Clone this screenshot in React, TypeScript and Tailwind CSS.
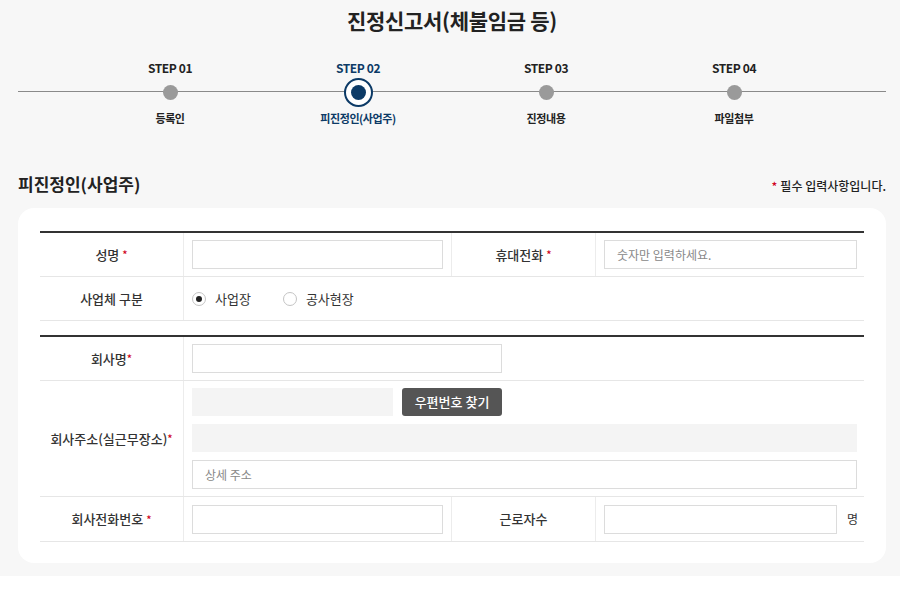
import React from "react";

const FONT = { fontFamily: '"Noto Sans CJK KR", "Noto Sans", sans-serif' };

const steps = [
  { no: "STEP 01", label: "등록인" },
  { no: "STEP 02", label: "피진정인(사업주)", active: true },
  { no: "STEP 03", label: "진정내용" },
  { no: "STEP 04", label: "파일첨부" },
];

function Req({ tight }: { tight?: boolean }) {
  return (
    <span className={`text-[#d0021b] text-[11px] align-top ${tight ? "ml-0" : "ml-[3px]"}`}>*</span>
  );
}

function TextInput({ className = "", placeholder }: { className?: string; placeholder?: string }) {
  return (
    <input
      placeholder={placeholder}
      className={`h-[29px] border border-[#dcdcdc] bg-white px-3 text-[12px] text-[#333] placeholder:text-[#888] outline-none ${className}`}
    />
  );
}

function Label({ children, border = true }: { children: React.ReactNode; border?: boolean }) {
  return (
    <div
      className={`w-[144px] shrink-0 flex items-center justify-center text-[13px] font-medium text-[#333] ${
        border ? "border-r border-[#ececec]" : ""
      }`}
    >
      {children}
    </div>
  );
}

function Radio({ checked, label }: { checked?: boolean; label: string }) {
  return (
    <label className="flex items-center gap-[9px] text-[13px] text-[#333]">
      <span className="w-[14px] h-[14px] rounded-full border border-[#c4c4c4] bg-white flex items-center justify-center">
        {checked && <span className="w-[6px] h-[6px] rounded-full bg-[#222]" />}
      </span>
      {label}
    </label>
  );
}

export default function App() {
  return (
    <div style={FONT} className="min-h-[593px] bg-white">
      <div className="bg-[#f7f7f7] pl-[18px] pr-[14px] pb-[13px]">
        <h1 className="h-[40px] leading-[40px] text-center text-[21px] font-bold text-[#222] tracking-[-0.3px]">
          진정신고서(체불임금 등)
        </h1>

        {/* steps */}
        <div className="relative mt-[18px] flex pl-[58px]">
          <div className="absolute left-0 right-0 top-[33px] h-px bg-[#8a8a8a]" />
          {steps.map((s) => (
            <div key={s.no} className="relative w-[188px] flex flex-col items-center">
              <div
                className={`h-[20px] leading-[20px] text-[12px] font-bold tracking-[-0.4px] ${
                  s.active ? "text-[#0c3a66]" : "text-[#222]"
                }`}
              >
                {s.no}
              </div>
              <div className="h-[28px] flex items-center justify-center">
                {s.active ? (
                  <span className="w-[29px] h-[29px] rounded-full border-2 border-[#0c3a66] bg-white flex items-center justify-center">
                    <span className="w-[15px] h-[15px] rounded-full bg-[#0c3a66]" />
                  </span>
                ) : (
                  <span className="w-[15px] h-[15px] rounded-full bg-[#9a9a9a]" />
                )}
              </div>
              <div
                className={`h-[24px] leading-[24px] text-[11px] font-bold tracking-[-0.4px] ${
                  s.active ? "text-[#0c3a66]" : "text-[#222]"
                }`}
              >
                {s.label}
              </div>
            </div>
          ))}
        </div>

        {/* section header */}
        <div className="mt-[39px] h-[30px] flex items-center justify-between">
          <h2 className="text-[17px] font-bold text-[#222]">피진정인(사업주)</h2>
          <p className="text-[12px] font-medium text-[#222] pt-[4px]">
            <span className="text-[#d0021b] mr-[3px]">*</span>필수 입력사항입니다.
          </p>
        </div>

        {/* card */}
        <div className="mt-[9px] rounded-[16px] bg-white px-[22px] pt-[23px] pb-[21px]">
          {/* table 1 */}
          <div className="border-t-2 border-[#333]">
            <div className="flex h-[44px] border-b border-[#e6e6e6]">
              <Label>
                성명<Req />
              </Label>
              <div className="w-[268px] flex items-center pl-[8px] border-r border-[#ececec]">
                <TextInput className="w-[251px]" />
              </div>
              <Label>
                휴대전화<Req />
              </Label>
              <div className="flex-1 flex items-center pl-[8px]">
                <TextInput className="w-[253px]" placeholder="숫자만 입력하세요." />
              </div>
            </div>
            <div className="flex h-[44px] border-b border-[#e6e6e6]">
              <Label>사업체 구분</Label>
              <div className="flex-1 flex items-center gap-[32px] pl-[8px]">
                <Radio checked label="사업장" />
                <Radio label="공사현장" />
              </div>
            </div>
          </div>

          {/* table 2 */}
          <div className="mt-[14px] border-t-2 border-[#333]">
            <div className="flex h-[44px] border-b border-[#e6e6e6]">
              <Label>
                회사명<Req tight />
              </Label>
              <div className="flex-1 flex items-center pl-[8px]">
                <TextInput className="w-[310px]" />
              </div>
            </div>
            <div className="flex h-[116px] border-b border-[#e6e6e6]">
              <Label>
                회사주소(실근무장소)<Req tight />
              </Label>
              <div className="flex-1 flex flex-col gap-[8px] pl-[8px] pr-[7px] pt-[7px]">
                <div className="flex gap-[9px]">
                  <div className="w-[201px] h-[28px] bg-[#f4f4f4]" />
                  <button className="w-[100px] h-[28px] rounded-[3px] bg-[#555] text-white text-[13px] font-medium">
                    우편번호 찾기
                  </button>
                </div>
                <div className="h-[28px] bg-[#f4f4f4]" />
                <TextInput className="w-full" placeholder="상세 주소" />
              </div>
            </div>
            <div className="flex h-[45px] border-b border-[#e6e6e6]">
              <Label>
                회사전화번호<Req />
              </Label>
              <div className="w-[268px] flex items-center pl-[8px] border-r border-[#ececec]">
                <TextInput className="w-[251px]" />
              </div>
              <Label>근로자수</Label>
              <div className="flex-1 flex items-center pl-[8px] gap-[10px]">
                <TextInput className="w-[233px]" />
                <span className="text-[12px] text-[#333]">명</span>
              </div>
            </div>
          </div>
        </div>
      </div>
    </div>
  );
}
